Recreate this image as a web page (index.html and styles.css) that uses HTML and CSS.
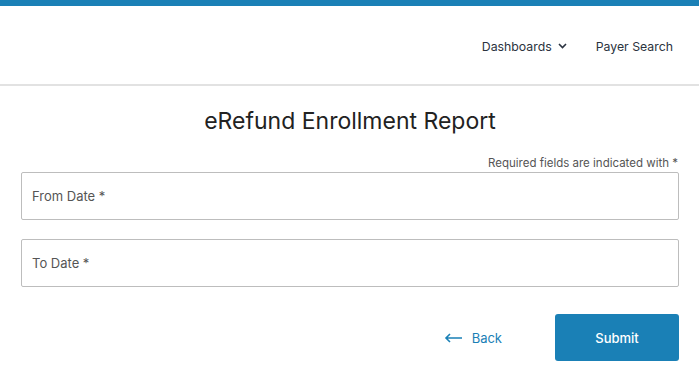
FILE: index.html
```html
<!DOCTYPE html>
<html lang="en">
<head>
  <meta charset="UTF-8">
  <meta name="viewport" content="width=device-width, initial-scale=1.0">
  <title>eRefund Enrollment Report</title>
  <link rel="stylesheet" href="styles.css">
</head>
<body>
  <header class="site-header">
    <nav class="main-nav">
      <a href="#" class="nav-link">Dashboards
        <svg class="caret" width="9" height="6" viewBox="0 0 9 6"><path d="M1 1l3.5 3.5L8 1" fill="none" stroke="#2b3340" stroke-width="1.6"/></svg>
      </a>
      <a href="#" class="nav-link">Payer Search</a>
    </nav>
  </header>

  <main class="report">
    <h1 class="report-title">eRefund Enrollment Report</h1>
    <p class="required-note">Required fields are indicated with *</p>
    <form class="report-form">
      <label class="field"><span>From Date *</span></label>
      <label class="field"><span>To Date *</span></label>
      <div class="actions">
        <a href="#" class="back-link">
          <svg width="19" height="10" viewBox="0 0 19 10"><path d="M18 5H2M6 1L2 5l4 4" fill="none" stroke="#1a80b6" stroke-width="1.6"/></svg>
          Back
        </a>
        <button type="submit" class="submit-btn">Submit</button>
      </div>
    </form>
  </main>
</body>
</html>
```

FILE: styles.css
```css
body { margin: 0; font-family: Inter, "Open Sans", sans-serif; color: #2b3340; background: #fff; }
.site-header { border-top: 6px solid #1a80b6; border-bottom: 2px solid #e2e2e2; height: 78px; display: flex; align-items: center; justify-content: flex-end; padding-right: 26px; }
.main-nav { display: flex; gap: 29px; margin-top: 2px; }
.nav-link { color: #2b3340; text-decoration: none; font-size: 12.3px; display: flex; align-items: center; gap: 6px; }
.report { padding: 0 20px 0 21px; }
.report-title { text-align: center; font-weight: 400; font-size: 23px; margin: 20px 0 0; line-height: 30px; color: #222; }
.required-note { text-align: right; font-size: 11.5px; color: #555; margin: 20px 1px 2px 0; line-height: 14px; }
.report-form { display: flex; flex-direction: column; gap: 19px; }
.field { display: flex; align-items: center; height: 46px; border: 1px solid #bdbdbd; border-radius: 2px; padding: 0 10px; font-size: 13px; color: #555; }
.actions { display: flex; justify-content: flex-end; align-items: center; gap: 53px; margin-top: 8px; }
.back-link { color: #1a80b6; text-decoration: none; font-size: 13px; display: flex; align-items: center; gap: 9px; }
.submit-btn { width: 124px; height: 47px; background: #1a80b6; color: #fff; border: none; border-radius: 3px; font: 500 13px Inter, "Open Sans", sans-serif; cursor: pointer; }
```
